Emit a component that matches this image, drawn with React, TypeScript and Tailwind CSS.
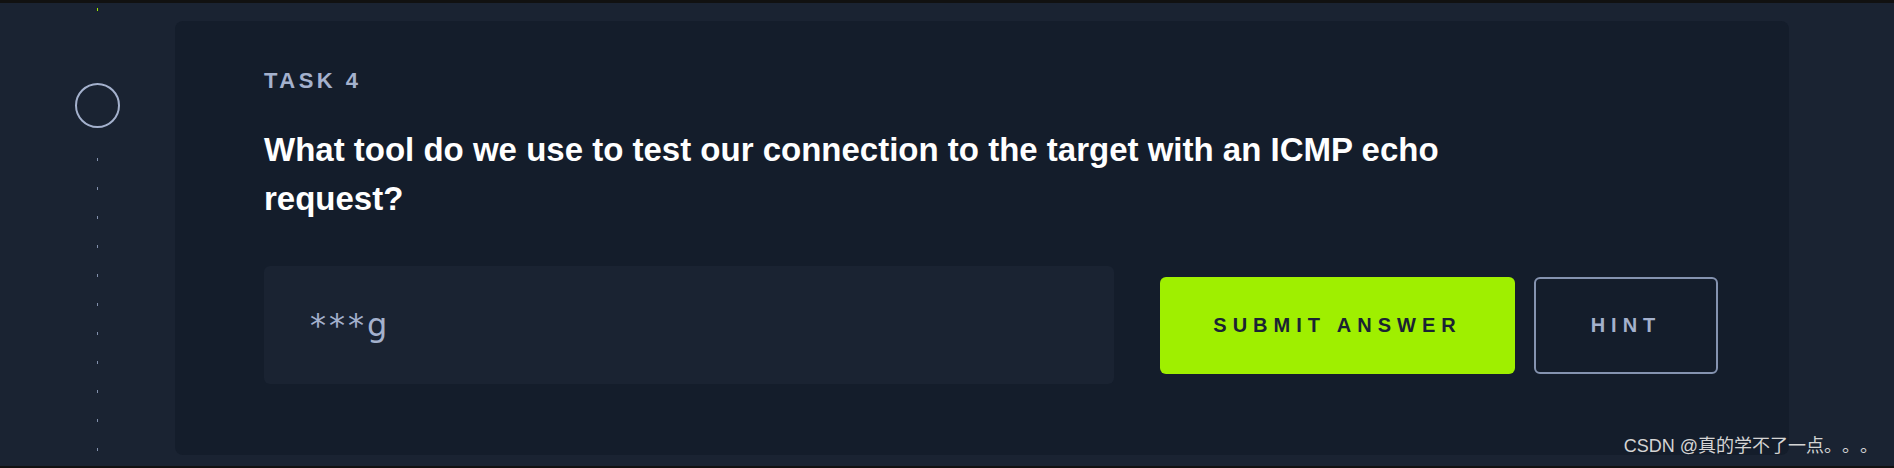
import React from 'react'

const dots = Array.from({ length: 11 })

const App: React.FC = () => {
  return (
    <main className="relative w-full h-[468px] bg-[#1a2332] border-t-[3px] border-b-2 border-[#111] overflow-hidden font-['Liberation_Sans',Arial,sans-serif]">
      <div className="flex pt-[18px]">
        {/* Timeline */}
        <div className="w-[175px] shrink-0 pl-[20px] -mt-[13px] flex flex-col items-center">
          <div className="w-px h-[3px] bg-[#9fef00]" />
          <div className="mt-[72px] w-[45px] h-[45px] rounded-full border-2 border-[#a4b1cd]" />
          <div className="mt-[30px] flex flex-col items-center gap-[26px]">
            {dots.map((_, i) => (
              <div key={i} className="w-px h-[3px] bg-[#8391ad]" />
            ))}
          </div>
        </div>

        {/* Task card */}
        <section className="w-[1614px] h-[434px] shrink-0 rounded-lg bg-[#141d2b] pl-[89px] pr-[71px] pt-[46px]">
          <p className="text-[22px] leading-[28px] font-bold tracking-[3.5px] text-[#a4b1cd]">TASK 4</p>
          <h2 className="mt-[30px] max-w-[1250px] text-[33px] leading-[49px] font-bold text-white">
            What tool do we use to test our connection to the target with an ICMP echo request?
          </h2>
          <div className="mt-[43px] flex items-center">
            <div className="w-[850px] h-[118px] rounded-md bg-[#1a2332] flex items-center pl-[46px]">
              <span className="text-[32px] tracking-[3px] text-[#a4b1cd] font-['DejaVu_Sans',sans-serif]">***g</span>
            </div>
            <button className="ml-[46px] w-[355px] h-[97px] rounded-md bg-[#9fef00] text-[20px] font-semibold tracking-[6px] text-[#1a2332]">
              SUBMIT ANSWER
            </button>
            <button className="ml-[19px] w-[184px] h-[97px] rounded-md border-2 border-[#8593b0] text-[20px] font-bold tracking-[6px] text-[#a4b1cd]">
              HINT
            </button>
          </div>
        </section>
      </div>

      <span className="absolute right-[16px] bottom-[6px] text-[18px] text-[#d4d4d4] [text-spacing-trim:space-all] font-['Liberation_Sans','Noto_Sans_CJK_SC',sans-serif]">
        CSDN @真的学不了一点。。。
      </span>
    </main>
  )
}

export default App
